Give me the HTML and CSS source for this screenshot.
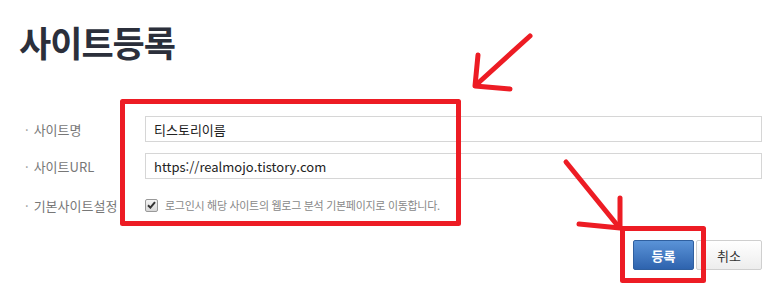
FILE: index.html
```html
<!DOCTYPE html>
<html lang="ko">
<head>
    <meta charset="UTF-8">
    <meta name="viewport" content="width=device-width, initial-scale=1.0">
    <title>사이트등록</title>
    <link rel="stylesheet" href="styles.css">
</head>
<body>
    <div class="page">
        <h1 class="title">사이트등록</h1>

        <form class="site-form">
            <div class="form-row">
                <label class="form-label" for="site-name">사이트명</label>
                <input type="text" id="site-name" class="form-input" value="티스토리이름">
            </div>
            <div class="form-row">
                <label class="form-label" for="site-url">사이트URL</label>
                <input type="text" id="site-url" class="form-input" value="https://realmojo.tistory.com">
            </div>
            <div class="form-row">
                <span class="form-label">기본사이트설정</span>
                <label class="check-label">
                    <span class="check-box">
                        <svg width="9" height="8" viewBox="0 0 9 8"><path d="M1 4.2 L3.4 6.6 L8 1.2" fill="none" stroke="#333" stroke-width="2"/></svg>
                    </span>
                    로그인시 해당 사이트의 웹로그 분석 기본페이지로 이동합니다.
                </label>
            </div>

            <div class="actions">
                <button type="submit" class="btn btn-primary">등록</button>
                <button type="button" class="btn btn-cancel">취소</button>
            </div>
        </form>

        <svg class="marks" width="776" height="287" viewBox="0 0 776 287">
            <g fill="none" stroke="#ed1c24" stroke-width="5" stroke-linecap="round" stroke-linejoin="round">
                <rect x="122.5" y="101.5" width="336" height="122" stroke-linecap="butt"/>
                <rect x="622.5" y="228.5" width="81" height="52" stroke-linecap="butt"/>
                <path d="M530 36 L476 85"/>
                <path d="M478 55 L475 86 L510 89"/>
                <path d="M566 162 L618 226"/>
                <path d="M620 198 L620 227"/>
                <path d="M579 224 L620 228"/>
            </g>
        </svg>
    </div>
</body>
</html>
```

FILE: styles.css
```css
body {
    margin: 0;
    background: #fff;
    font-family: "Noto Sans CJK KR", "Noto Sans", sans-serif;
}

.page {
    position: relative;
    width: 776px;
    height: 287px;
    overflow: hidden;
}

.title {
    margin: 0;
    padding: 19px 0 0 19px;
    font-size: 35px;
    line-height: 46px;
    font-weight: bold;
    color: #2b2f3b;
    letter-spacing: -1px;
}

.site-form {
    padding: 51px 14px 0 25px;
}

.form-row {
    display: flex;
    align-items: center;
    height: 26px;
    margin-bottom: 11px;
}

.form-row:nth-child(3) {
    margin-top: 13px;
}

.form-label {
    width: 120px;
    font-size: 13px;
    color: #777;
}

.form-label::before {
    content: "·";
    margin-right: 5px;
    color: #999;
}

.form-input {
    flex: 1;
    height: 26px;
    box-sizing: border-box;
    border: 1px solid #d6d6d6;
    padding: 0 8px;
    font-family: "Noto Sans CJK KR", "Noto Sans", sans-serif;
    font-size: 13px;
    color: #222;
    outline: none;
}

.check-label {
    display: flex;
    align-items: center;
    font-size: 11px;
    letter-spacing: -0.3px;
    color: #888;
}

.check-box {
    display: flex;
    align-items: center;
    justify-content: center;
    width: 11px;
    height: 11px;
    margin-right: 7px;
    border: 1px solid #999;
    border-radius: 2px;
    background: linear-gradient(#f4f4f4, #d8d8d8);
}

.actions {
    display: flex;
    justify-content: flex-end;
    gap: 2px;
    margin-top: 22px;
}

.btn {
    height: 30px;
    padding: 0;
    font-family: "Noto Sans CJK KR", "Noto Sans", sans-serif;
    font-size: 13px;
    border-radius: 2px;
    cursor: pointer;
}

.btn-primary {
    width: 61px;
    border: 1px solid #2f5f9f;
    background: linear-gradient(#5a93d8, #2e63ae);
    color: #fff;
    font-weight: bold;
}

.btn-cancel {
    width: 66px;
    border: 1px solid #cfcfcf;
    background: linear-gradient(#ffffff, #ededed);
    color: #333;
}

.marks {
    position: absolute;
    left: 0;
    top: 0;
    pointer-events: none;
}
```
